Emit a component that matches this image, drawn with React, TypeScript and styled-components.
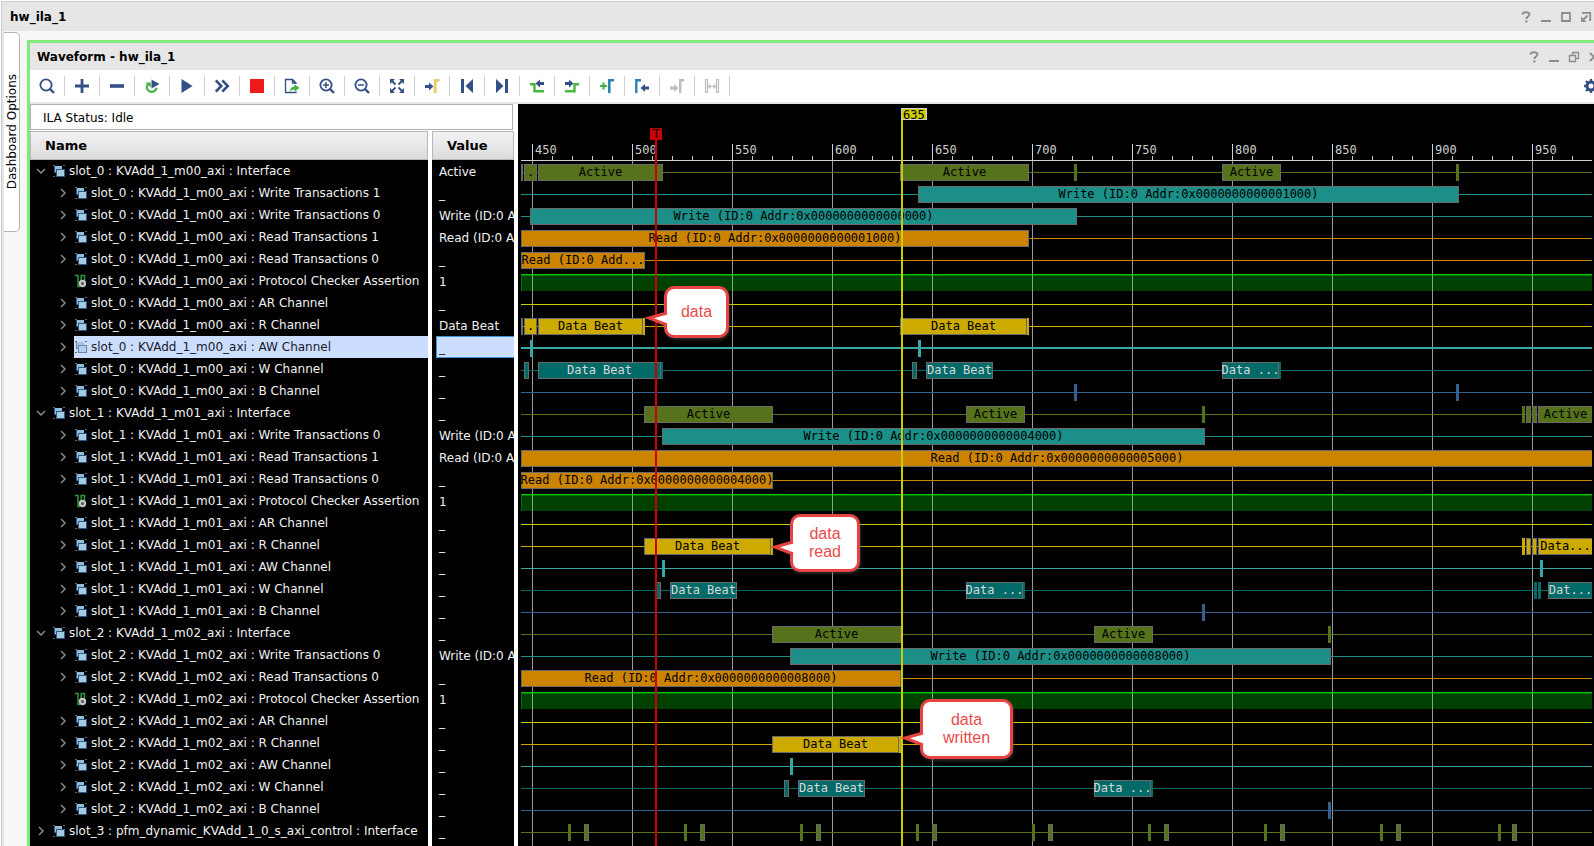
import React from "react";
import styled, { createGlobalStyle, css } from "styled-components";

const NAVY = "#334f85";
const GREEN = "#3fb23f";
const BLUE = "#2f7fb5";
const DISABLED = "#bdbdbd";

const GlobalStyle = createGlobalStyle`
  *, *::before, *::after { box-sizing: border-box; }
  body {
    margin: 0;
    background: #ffffff;
    color: #000000;
    font-family: "DejaVu Sans", sans-serif;
    font-size: 12px;
  }
  button { font: inherit; color: inherit; background: none; border: 0; padding: 0; }
`;

/* ---------- window frame ---------- */

const Page = styled.div`
  min-height: 100vh;
  display: flex;
  flex-direction: column;
  padding: 1px 0 0 1px;
  overflow: hidden;
`;

const Frame = styled.div`
  flex: 1;
  display: flex;
  flex-direction: column;
  border-top: 1px solid #c8cccc;
  border-left: 1px solid #c8cccc;
  background: #f7f7f7;
`;

const TitleBar = styled.header<{ $inner?: boolean }>`
  display: flex;
  align-items: center;
  justify-content: space-between;
  height: ${(p) => (p.$inner ? 27 : 29)}px;
  padding-left: ${(p) => (p.$inner ? 7 : 8)}px;
  padding-right: ${(p) => (p.$inner ? 0 : 3)}px;
  background: #e6e6e6;
  overflow: hidden;
`;

const Title = styled.h1`
  margin: 0;
  font-size: 12px;
  line-height: 16px;
  font-weight: bold;
`;

const WindowButtons = styled.div<{ $inner?: boolean }>`
  display: flex;
  gap: 10px;
  margin-right: ${(p) => (p.$inner ? -5 : 0)}px;
`;

const WindowButton = styled.button`
  width: 10px;
  height: 12px;
  flex: none;
  color: #8c8c8c;
  svg { display: block; overflow: visible; }
`;

const Body = styled.div`
  flex: 1;
  display: flex;
  border-left: 2px solid #e6e6e6;
`;

const SideRail = styled.nav`
  width: 23px;
  flex: none;
  padding-top: 1px;
`;

const SideTab = styled.button`
  width: 16px;
  height: 200px;
  display: flex;
  align-items: center;
  justify-content: center;
  background: #ffffff;
  border: 1px solid #b4b4b4;
  border-left: 0;
  border-radius: 0 5px 5px 0;
  font-size: 12px;
  span { writing-mode: vertical-rl; transform: rotate(180deg); white-space: nowrap; }
`;

const Panel = styled.main`
  flex: 1;
  min-width: 0;
  display: flex;
  flex-direction: column;
  margin-top: 9px;
  border-top: 3px solid #82e97c;
  border-left: 3px solid #82e97c;
  background: #ffffff;
`;

/* ---------- toolbar ---------- */

const Toolbar = styled.div`
  display: flex;
  align-items: center;
  height: 34px;
  border-bottom: 2px solid #e6e6e6;
  overflow: hidden;
`;

const Tool = styled.button`
  width: 35px;
  height: 20px;
  flex: none;
  display: flex;
  align-items: center;
  justify-content: center;
  border-right: 1px solid #cfcfcf;
`;

const Settings = styled.button`
  margin-left: auto;
  margin-right: -5px;
  flex: none;
  svg { display: block; }
`;

/* ---------- signal list ---------- */

const Workspace = styled.div`
  flex: 1;
  display: flex;
  gap: 4px;
`;

const SignalPane = styled.section`
  width: 484px;
  flex: none;
  display: flex;
  flex-direction: column;
`;

const Status = styled.div`
  height: 26px;
  line-height: 26px;
  margin: 0 1px 1px 0;
  padding-left: 12px;
  border: 1px solid #b0b0b0;
  background: #ffffff;
  font-size: 12px;
`;

const SignalTable = styled.table`
  flex: 1;
  display: flex;
  flex-direction: column;
  border-spacing: 0;
  text-align: left;
  font-size: 12px;
`;

const TableHead = styled.thead`
  display: block;
`;

const TableBody = styled.tbody`
  flex: 1;
  display: flex;
  flex-direction: column;
  background: linear-gradient(to right, #000 398px, #fff 398px, #fff 402px, #000 402px);
`;

const TableRow = styled.tr`
  display: grid;
  grid-template-columns: 398px 82px;
  column-gap: 4px;
`;

const HeadCell = styled.th`
  height: 29px;
  line-height: 26px;
  padding-left: 14px;
  border: 1px solid #b8b8b8;
  background: linear-gradient(#f2f2f3, #dcdcde);
  font-size: 13px;
`;

const selectedFill = css`
  background: #ccdeff;
  color: #1a1a2a;
`;

const NameCell = styled.td<{ $depth: number }>`
  display: flex;
  height: 22px;
  padding: 0 0 0 ${(p) => 5 + p.$depth * 22}px;
  color: #f2f2f2;
  overflow: hidden;
`;

const Expander = styled.button`
  width: 12px;
  height: 22px;
  flex: none;
  margin-right: 5px;
  svg { display: block; }
`;

const SignalLabel = styled.span<{ $selected?: boolean }>`
  flex: 1;
  min-width: 0;
  display: flex;
  align-items: center;
  gap: 3px;
  height: 22px;
  line-height: 24px;
  white-space: nowrap;
  ${(p) => p.$selected && selectedFill}
  svg { flex: none; }
`;

const ValueCell = styled.td<{ $selected?: boolean }>`
  height: 22px;
  line-height: ${(p) => (p.$selected ? 22 : 24)}px;
  margin-left: 4px;
  padding: 0 0 0 ${(p) => (p.$selected ? 2 : 3)}px;
  color: #f2f2f2;
  white-space: nowrap;
  ${(p) => p.$selected && selectedFill}
  ${(p) => p.$selected && "border: 1px solid #3f96d8; border-right: 0;"}
`;

/* ---------- waveform ---------- */

const WavePane = styled.section`
  flex: 1;
  min-width: 0;
  padding: 0 2px 0 3px;
  background: #000000;
  color: #000000;
  font-family: "DejaVu Sans Mono", monospace;
  font-size: 12px;
`;

const Plot = styled.div`
  position: relative;
  height: 100%;
`;

const Ruler = styled.div`
  display: flex;
  align-items: flex-end;
  height: 57px;
  padding-left: 11px;
  overflow: hidden;
  border-bottom: 1px solid #d0d0d0;
  background: repeating-linear-gradient(to right, #d0d0d0 0 1px, transparent 1px 20px) 11px 100% / 100% 4px no-repeat;
`;

const RulerLabel = styled.span`
  width: 100px;
  height: 16px;
  flex: none;
  padding-left: 2px;
  line-height: 12px;
  border-left: 1px solid #d0d0d0;
  color: #d0d0d0;
`;

const Lanes = styled.div`
  position: relative;
  height: calc(100% - 57px);
  overflow: hidden;
  background: repeating-linear-gradient(to right, #999999 0 1px, transparent 1px 100px) 11px 0 / 100% 100% no-repeat;
`;

const Lane = styled.div<{ $color: string; $thick?: boolean }>`
  position: relative;
  height: 22px;
  top: -1px;
  &::before {
    content: "";
    position: absolute;
    left: 0;
    right: 0;
    top: ${(p) => (p.$thick ? 11 : 12)}px;
    height: ${(p) => (p.$thick ? 2 : 1)}px;
    background: ${(p) => p.$color};
  }
`;

const LogicHigh = styled.div`
  position: relative;
  top: -1px;
  height: 22px;
  padding: 4px 0 1px;
  &::before {
    content: "";
    display: block;
    height: 17px;
    border-top: 1px solid #00cc00;
    border-left: 1px solid #007000;
    background: linear-gradient(rgba(0, 255, 0, 0.45) 1px, rgba(0, 255, 0, 0.25) 1px);
  }
`;

const Segment = styled.div<{ $fill: string; $ink: string; $plain?: boolean; $open?: boolean }>`
  position: absolute;
  top: 4px;
  height: 17px;
  line-height: 15px;
  border: ${(p) => (p.$plain ? 0 : 1)}px solid #6a6a6a;
  ${(p) => p.$open && "right: 0; border-right: 0;"}
  background: ${(p) => p.$fill};
  color: ${(p) => p.$ink};
  display: flex;
  justify-content: center;
  white-space: pre;
`;

const Cursor = styled.div<{ $color: string }>`
  position: absolute;
  bottom: 0;
  width: 2px;
  background: ${(p) => p.$color};
`;

const TriggerFlag = styled.span`
  position: absolute;
  top: 0;
  left: -5px;
  width: 12px;
  height: 12px;
  line-height: 13px;
  text-align: center;
  background: #cc0000;
`;

const TimeFlag = styled.span`
  position: absolute;
  top: 0;
  left: 0;
  width: 26px;
  height: 12px;
  line-height: 12px;
  padding-left: 1px;
  border: 1px solid #d0d0d0;
  background: #cccc00;
`;

const Callout = styled.div`
  position: absolute;
  display: flex;
  align-items: center;
  justify-content: center;
  text-align: center;
  white-space: pre-line;
  font-family: "Liberation Sans", sans-serif;
  font-size: 16px;
  line-height: 18px;
  color: #e94b4b;
  background: #ffffff;
  border: 3px solid #e84343;
  border-radius: 10px;
  box-shadow: 1px 2px 3px rgba(90, 90, 90, 0.45);
`;

const CalloutTail = styled.svg`
  position: absolute;
  top: -3px;
  left: -22px;
  overflow: visible;
`;

/* ---------- icons ---------- */

type IconProps = { children: React.ReactNode; size?: number };
const Icon = ({ children, size = 16 }: IconProps) => (
  <svg width={size} height={size} viewBox={`0 0 ${size} ${size}`} fill="none" aria-hidden="true">
    {children}
  </svg>
);

const arrowRight = (x: number, y: number, color: string) => (
  <path d={`M${x} ${y - 1.5}h4v-2.5l4.5 4l-4.5 4v-2.5h-4z`} fill={color} />
);
const arrowLeft = (x: number, y: number, color: string) => (
  <path d={`M${x} ${y - 1.5}h-4v-2.5l-4.5 4l4.5 4v-2.5h4z`} fill={color} />
);

const lens = (
  <>
    <circle cx="7" cy="7" r="5.6" stroke={NAVY} strokeWidth="1.8" />
    <path d="M11 11l4 4" stroke={NAVY} strokeWidth="2.4" />
  </>
);

const tools: { label: string; art: React.ReactNode; disabled?: boolean }[] = [
  { label: "Find", art: lens },
  { label: "Add", art: <path d="M1 8h14M8 1v14" stroke={NAVY} strokeWidth="2.8" /> },
  { label: "Remove", art: <path d="M1 8h14" stroke={NAVY} strokeWidth="3.6" /> },
  {
    label: "Restart trigger",
    art: (
      <>
        <path d="M3.6 6.4A4.900 4.900 0 1 0 12.600 9.800" stroke={GREEN} strokeWidth="2.200" />
        <path d="M1.500 4.400H6.800V9.600z" fill={GREEN} />
        <path d="M7.500 1.500L15.500 6L7.500 10.500z" fill={NAVY} />
      </>
    ),
  },
  { label: "Run trigger", art: <path d="M2.5 1L13.5 8L2.5 15z" fill={NAVY} /> },
  { label: "Run immediate", art: <path d="M1.8 2.3L7.3 8l-5.500 5.700M8.300 2.300L13.800 8l-5.500 5.700" stroke={NAVY} strokeWidth="2.600" /> },
  { label: "Stop trigger", art: <path d="M1 1h14v14H1z" fill="#ee1b1b" /> },
  {
    label: "Export data",
    art: (
      <>
        <path d="M12 6V5L8.500 1.500H1.500V14.500H12V13.500M8.500 1.500V5H12" stroke={NAVY} strokeWidth="1.300" />
        <path d="M6 14C6 10.500 7.500 8.700 10.500 8.600V6.200L15.500 10L10.500 13.600V11.400C8.500 11.300 7 12 6 14z" fill={GREEN} />
      </>
    ),
  },
  {
    label: "Zoom in",
    art: (
      <>
        {lens}
        <path d="M4 7h6M7 4v6" stroke={NAVY} strokeWidth="1.500" />
      </>
    ),
  },
  {
    label: "Zoom out",
    art: (
      <>
        {lens}
        <path d="M4 7h6" stroke={NAVY} strokeWidth="1.500" />
      </>
    ),
  },
  {
    label: "Zoom fit",
    art: (
      <>
        <path d="M1 1h5L1 6zM15 1v5L10 1zM1 15v-5L6 15zM15 15h-5L15 10z" fill={NAVY} />
        <path d="M2 2l4.500 4.500M14 2L9.500 6.500M2 14l4.500-4.500M14 14L9.500 9.500" stroke={NAVY} strokeWidth="1.800" />
      </>
    ),
  },
  {
    label: "Go to cursor",
    art: (
      <>
        {arrowRight(1, 8.5, NAVY)}
        <path d="M11.200 15V2.300H15.500" stroke="#e6cd63" strokeWidth="2.800" />
      </>
    ),
  },
  { label: "Go to start", art: <path d="M2 1h3v14H2zM14 1v14L6.500 8z" fill={NAVY} /> },
  { label: "Go to end", art: <path d="M11 1h3v14h-3zM2 1v14L9.500 8z" fill={NAVY} /> },
  {
    label: "Previous transition",
    art: (
      <>
        <path d="M1 6.200H5.500V13.200H15" stroke="#45b93c" strokeWidth="2.400" />
        {arrowLeft(15, 5.5, NAVY)}
      </>
    ),
  },
  {
    label: "Next transition",
    art: (
      <>
        <path d="M1 13.200H10.500V6.200H15" stroke="#45b93c" strokeWidth="2.400" />
        {arrowRight(1, 5.5, NAVY)}
      </>
    ),
  },
  {
    label: "Add marker",
    art: (
      <>
        <path d="M1 8h7M4.500 4.500v7" stroke={GREEN} strokeWidth="2.200" />
        <path d="M10.300 15V2.200H15" stroke={BLUE} strokeWidth="2.600" />
      </>
    ),
  },
  {
    label: "Previous marker",
    art: (
      <>
        <path d="M2.300 15V2.200H7" stroke={BLUE} strokeWidth="2.400" />
        {arrowLeft(15, 10, NAVY)}
      </>
    ),
  },
  {
    label: "Next marker",
    disabled: true,
    art: (
      <>
        {arrowRight(1, 10, DISABLED)}
        <path d="M11.200 15V2.200H15" stroke={DISABLED} strokeWidth="2.400" />
      </>
    ),
  },
  {
    label: "Swap cursors",
    disabled: true,
    art: (
      <path
        d="M1.500 14.500V1.500H3.500V14.500zM12.500 14.500V1.500H14.500V14.500zM4.500 8.500h7M6.500 6.500l-2 2l2 2M9.500 6.500l2 2l-2 2"
        stroke={DISABLED}
        strokeWidth="1.200"
      />
    ),
  },
];

const BusIcon = ({ dim }: { dim?: boolean }) => (
  <svg width="14" height="14" viewBox="0 0 14 14" aria-hidden="true" opacity={dim ? 0.65 : 1}>
    <path d="M1 1h2v1H1zM11 1h2v1h-2zM1 12h2v1H1zM12 12h1v1h-1z" fill={dim ? "#333" : "#6a6a6a"} />
    <rect x="2" y="2" width="8" height="7" fill="#33597f" />
    <rect x="3" y="2" width="7" height="6" fill="#8fbcdc" />
    <rect x="4" y="5" width="9" height="8" fill="#33597f" />
    <rect x="5" y="6" width="7" height="6" fill="#a3cbe4" />
  </svg>
);

const ProbeIcon = () => (
  <svg width="14" height="14" viewBox="0 0 14 14" fill="none" aria-hidden="true">
    <path d="M1 1.500h3V12.500h2M7.200 8V1.500h3.300v5" stroke="#2f9a45" strokeWidth="1.500" />
    <circle cx="8.500" cy="9.500" r="2.600" stroke="#c4c4c4" strokeWidth="2.200" fill="#555" />
  </svg>
);

const Chevron = ({ open }: { open?: boolean }) => (
  <svg width="12" height="22" viewBox="0 0 12 22" fill="none" aria-hidden="true">
    <path d={open ? "M2 9l4 4l4-4" : "M4 7l4 4l-4 4"} stroke="#8a8a8a" strokeWidth="1.500" />
  </svg>
);

const glyphs = {
  help: (
    <svg width="10" height="12" viewBox="0 0 10 12" fill="none">
      <path d="M1.500 3.500C1.700 1.700 3 1.200 5 1.200C7.200 1.200 8.500 2 8.500 3.600C8.500 5.500 5.300 5.500 5.300 8" stroke="currentColor" strokeWidth="1.900" />
      <path d="M4.200 9.500h2.200v2H4.200z" fill="currentColor" />
    </svg>
  ),
  minimize: (
    <svg width="10" height="12" viewBox="0 0 10 12"><path d="M0 9h10v2H0z" fill="currentColor" /></svg>
  ),
  maximize: (
    <svg width="10" height="12" viewBox="0 0 10 12" fill="none"><path d="M1 2h8v8H1z" stroke="currentColor" strokeWidth="1.800" /></svg>
  ),
  restore: (
    <svg width="10" height="12" viewBox="0 0 10 12" fill="none">
      <path d="M.5 4.500h6v6h-6zM3.500 4.500v-3h6v6h-3" stroke="currentColor" strokeWidth="1.300" />
    </svg>
  ),
  popout: (
    <svg width="10" height="12" viewBox="0 0 10 12" fill="none">
      <path d="M1 1.800h8.200V10M6.500 4.500L2.500 8.500" stroke="currentColor" strokeWidth="1.800" />
      <path d="M0 5.500V11h5.500z" fill="currentColor" />
    </svg>
  ),
  close: (
    <svg width="10" height="12" viewBox="0 0 10 12" fill="none"><path d="M1 2l8 8M9 2l-8 8" stroke="currentColor" strokeWidth="1.800" /></svg>
  ),
};

/* ---------- data ---------- */

type Kind = "active" | "write" | "read" | "high" | "ar" | "r" | "aw" | "w" | "b";
type Style = "box" | "pulse";
/* start, end, text, style; an end of null runs on past the visible range */
type Seg = [number, number | null, string?, Style?];
type Signal = {
  name: string;
  value: string;
  kind: Kind;
  depth: 0 | 1;
  open?: boolean;
  selected?: boolean;
  segs?: Seg[];
};

const colors: Record<Kind, string> = {
  active: "#56731c",
  write: "#1c8f88",
  read: "#cc8400",
  high: "#00cc00",
  ar: "#cccc00",
  r: "#ccaa00",
  aw: "#3aa6a2",
  w: "#006a68",
  b: "#33628f",
};

const pulse = (x: number): Seg => [x, x + 3, "", "pulse"];
const tail = (x: number): Seg => [x, x + 2, "", "pulse"];

const s0 = "slot_0 : KVAdd_1_m00_axi : ";
const s1 = "slot_1 : KVAdd_1_m01_axi : ";
const s2 = "slot_2 : KVAdd_1_m02_axi : ";

const controlPulses: Seg[] = [47, 163, 279, 395, 511, 627, 743, 859, 977].flatMap((x, i): Seg[] => [
  pulse(x),
  [x + (i === 8 ? 14 : 16), x + (i === 8 ? 19 : 21)],
]);

const signals: Signal[] = [
  { name: s0 + "Interface", value: "Active", kind: "active", depth: 0, open: true,
    segs: [[0, 2], [3, 16, "."], [17, 142, "Active"], [379, 508, "Active"], pulse(553), [701, 760, "Active"], pulse(935)] },
  { name: s0 + "Write Transactions 1", value: "_", kind: "write", depth: 1, segs: [[397, 938, "Write (ID:0 Addr:0x0000000000001000)"]] },
  { name: s0 + "Write Transactions 0", value: "Write (ID:0 A", kind: "write", depth: 1, segs: [[9, 556, "Write (ID:0 Addr:0x0000000000000000)"]] },
  { name: s0 + "Read Transactions 1", value: "Read (ID:0 A", kind: "read", depth: 1, segs: [[0, 508, "Read (ID:0 Addr:0x0000000000001000)"]] },
  { name: s0 + "Read Transactions 0", value: "_", kind: "read", depth: 1, segs: [[0, 124, "Read (ID:0 Add..."]] },
  { name: s0 + "Protocol Checker Assertion", value: "1", kind: "high", depth: 1 },
  { name: s0 + "AR Channel", value: "_", kind: "ar", depth: 1 },
  { name: s0 + "R Channel", value: "Data Beat", kind: "r", depth: 1,
    segs: [[0, 2], [3, 16, "."], [17, 122, "Data Beat"], tail(122), [379, 506, "Data Beat"], tail(506)] },
  { name: s0 + "AW Channel", value: "_", kind: "aw", depth: 1, selected: true, segs: [pulse(9), pulse(397)] },
  { name: s0 + "W Channel", value: "_", kind: "w", depth: 1,
    segs: [[3, 8], [17, 140, "Data Beat"], tail(140), [391, 396], [405, 472, "Data Beat"], [701, 758, "Data ..."], tail(758)] },
  { name: s0 + "B Channel", value: "_", kind: "b", depth: 1, segs: [pulse(553), pulse(935)] },
  { name: s1 + "Interface", value: "_", kind: "active", depth: 0, open: true,
    segs: [[123, 252, "Active"], [445, 504, "Active"], pulse(681), pulse(1001), [1005, 1010], [1011, 1016], [1017, null, "Active"]] },
  { name: s1 + "Write Transactions 0", value: "Write (ID:0 A", kind: "write", depth: 1, segs: [[141, 684, "Write (ID:0 Addr:0x0000000000004000)"]] },
  { name: s1 + "Read Transactions 1", value: "Read (ID:0 A", kind: "read", depth: 1, segs: [[0, null, "Read (ID:0 Addr:0x0000000000005000)"]] },
  { name: s1 + "Read Transactions 0", value: "_", kind: "read", depth: 1, segs: [[0, 252, "Read (ID:0 Addr:0x0000000000004000)"]] },
  { name: s1 + "Protocol Checker Assertion", value: "1", kind: "high", depth: 1 },
  { name: s1 + "AR Channel", value: "_", kind: "ar", depth: 1 },
  { name: s1 + "R Channel", value: "_", kind: "r", depth: 1,
    segs: [[123, 250, "Data Beat"], tail(250), pulse(1001), [1005, 1010], [1011, 1016], [1017, null, "Data..."]] },
  { name: s1 + "AW Channel", value: "_", kind: "aw", depth: 1, segs: [pulse(141), pulse(1019)] },
  { name: s1 + "W Channel", value: "_", kind: "w", depth: 1,
    segs: [[135, 140], [149, 216, "Data Beat"], [445, 502, "Data ..."], tail(502), pulse(1013), pulse(1017), [1027, null, "Dat..."]] },
  { name: s1 + "B Channel", value: "_", kind: "b", depth: 1, segs: [pulse(681)] },
  { name: s2 + "Interface", value: "_", kind: "active", depth: 0, open: true, segs: [[251, 380, "Active"], [573, 632, "Active"], pulse(807)] },
  { name: s2 + "Write Transactions 0", value: "Write (ID:0 A", kind: "write", depth: 1, segs: [[269, 810, "Write (ID:0 Addr:0x0000000000008000)"]] },
  { name: s2 + "Read Transactions 0", value: "_", kind: "read", depth: 1, segs: [[0, 380, "Read (ID:0 Addr:0x0000000000008000)"]] },
  { name: s2 + "Protocol Checker Assertion", value: "1", kind: "high", depth: 1 },
  { name: s2 + "AR Channel", value: "_", kind: "ar", depth: 1 },
  { name: s2 + "R Channel", value: "_", kind: "r", depth: 1, segs: [[251, 378, "Data Beat"], tail(378)] },
  { name: s2 + "AW Channel", value: "_", kind: "aw", depth: 1, segs: [pulse(269)] },
  { name: s2 + "W Channel", value: "_", kind: "w", depth: 1, segs: [[263, 268], [277, 344, "Data Beat"], [573, 630, "Data ..."], tail(630)] },
  { name: s2 + "B Channel", value: "_", kind: "b", depth: 1, segs: [pulse(807)] },
  { name: "slot_3 : pfm_dynamic_KVAdd_1_0_s_axi_control : Interface", value: "_", kind: "active", depth: 0, segs: controlPulses },
];

const rulerMarks = [450, 500, 550, 600, 650, 700, 750, 800, 850, 900, 950];

const callouts = [
  { text: "data", left: 143, top: 182, width: 65, height: 52, tip: 30, reach: 20 },
  { text: "data\nread", left: 269, top: 410, width: 70, height: 58, tip: 31, reach: 20 },
  { text: "data\nwritten", left: 399, top: 595, width: 93, height: 60, tip: 37, reach: 20 },
];

/* ---------- views ---------- */

const SignalList = () => (
  <SignalTable>
    <TableHead>
      <TableRow>
        <HeadCell scope="col">Name</HeadCell>
        <HeadCell scope="col">Value</HeadCell>
      </TableRow>
    </TableHead>
    <TableBody>
      {signals.map((s) => (
        <TableRow key={s.name}>
          <NameCell $depth={s.depth}>
            <Expander aria-label={s.open ? "Collapse" : "Expand"} disabled={s.kind === "high"}>
              {s.kind !== "high" && <Chevron open={s.open} />}
            </Expander>
            <SignalLabel $selected={s.selected}>
              {s.kind === "high" ? <ProbeIcon /> : <BusIcon dim={s.selected} />}
              {s.name}
            </SignalLabel>
          </NameCell>
          <ValueCell $selected={s.selected}>{s.value}</ValueCell>
        </TableRow>
      ))}
    </TableBody>
  </SignalTable>
);

const SignalLane = ({ signal }: { signal: Signal }) =>
  signal.kind === "high" ? (
    <LogicHigh />
  ) : (
    <Lane $color={colors[signal.kind]} $thick={signal.selected}>
      {signal.segs?.map(([from, to, text, style]) => (
        <Segment
          key={from}
          $fill={colors[signal.kind]}
          $ink={signal.kind === "w" ? "#d8d8d8" : "#000000"}
          $plain={style === "pulse"}
          $open={to === null}
          style={{ left: from, width: to === null ? undefined : to - from }}
        >
          {text}
        </Segment>
      ))}
    </Lane>
  );

const Waveform = () => (
  <WavePane aria-label="Waveform">
    <Plot>
      <Ruler>
        {rulerMarks.map((t) => (
          <RulerLabel key={t}>{t}</RulerLabel>
        ))}
      </Ruler>
      <Lanes>
        {signals.map((s) => (
          <SignalLane key={s.name} signal={s} />
        ))}
      </Lanes>
      <Cursor $color="#cc0000" style={{ left: 134, top: 24 }}>
        <TriggerFlag>T</TriggerFlag>
      </Cursor>
      <Cursor $color="#cccc00" style={{ left: 380, top: 4 }}>
        <TimeFlag>635</TimeFlag>
      </Cursor>
      {callouts.map((c) => (
        <Callout key={c.text} style={{ left: c.left, top: c.top, width: c.width, height: c.height }}>
          <CalloutTail width="22" height={c.height} aria-hidden="true">
            <path
              d={`M22 ${c.tip - 3}L${22 - c.reach + 2} ${c.tip + 2}L22 ${c.tip + 9}`}
              fill="#ffffff"
              stroke="#e84343"
              strokeWidth="3"
            />
          </CalloutTail>
          {c.text}
        </Callout>
      ))}
    </Plot>
  </WavePane>
);

export default function App() {
  return (
    <Page>
      <GlobalStyle />
      <Frame>
        <TitleBar>
          <Title>hw_ila_1</Title>
          <WindowButtons>
            <WindowButton aria-label="Help">{glyphs.help}</WindowButton>
            <WindowButton aria-label="Minimize">{glyphs.minimize}</WindowButton>
            <WindowButton aria-label="Maximize">{glyphs.maximize}</WindowButton>
            <WindowButton aria-label="Float">{glyphs.popout}</WindowButton>
          </WindowButtons>
        </TitleBar>
        <Body>
          <SideRail>
            <SideTab>
              <span>Dashboard Options</span>
            </SideTab>
          </SideRail>
          <Panel>
            <TitleBar $inner>
              <Title as="h2">Waveform - hw_ila_1</Title>
              <WindowButtons $inner>
                <WindowButton aria-label="Help">{glyphs.help}</WindowButton>
                <WindowButton aria-label="Minimize">{glyphs.minimize}</WindowButton>
                <WindowButton aria-label="Restore">{glyphs.restore}</WindowButton>
                <WindowButton aria-label="Close">{glyphs.close}</WindowButton>
              </WindowButtons>
            </TitleBar>
            <Toolbar>
              {tools.map((t) => (
                <Tool key={t.label} aria-label={t.label} disabled={t.disabled}>
                  <Icon>{t.art}</Icon>
                </Tool>
              ))}
              <Settings aria-label="Settings">
                <Icon>
                  <circle cx="8" cy="8" r="4" stroke={NAVY} strokeWidth="3" />
                  <path d="M8 1v3M8 12v3M1 8h3M12 8h3M3 3l2 2M13 3l-2 2M3 13l2-2M13 13l-2-2" stroke={NAVY} strokeWidth="2.400" />
                </Icon>
              </Settings>
            </Toolbar>
            <Workspace>
              <SignalPane>
                <Status>ILA Status: Idle</Status>
                <SignalList />
              </SignalPane>
              <Waveform />
            </Workspace>
          </Panel>
        </Body>
      </Frame>
    </Page>
  );
}
